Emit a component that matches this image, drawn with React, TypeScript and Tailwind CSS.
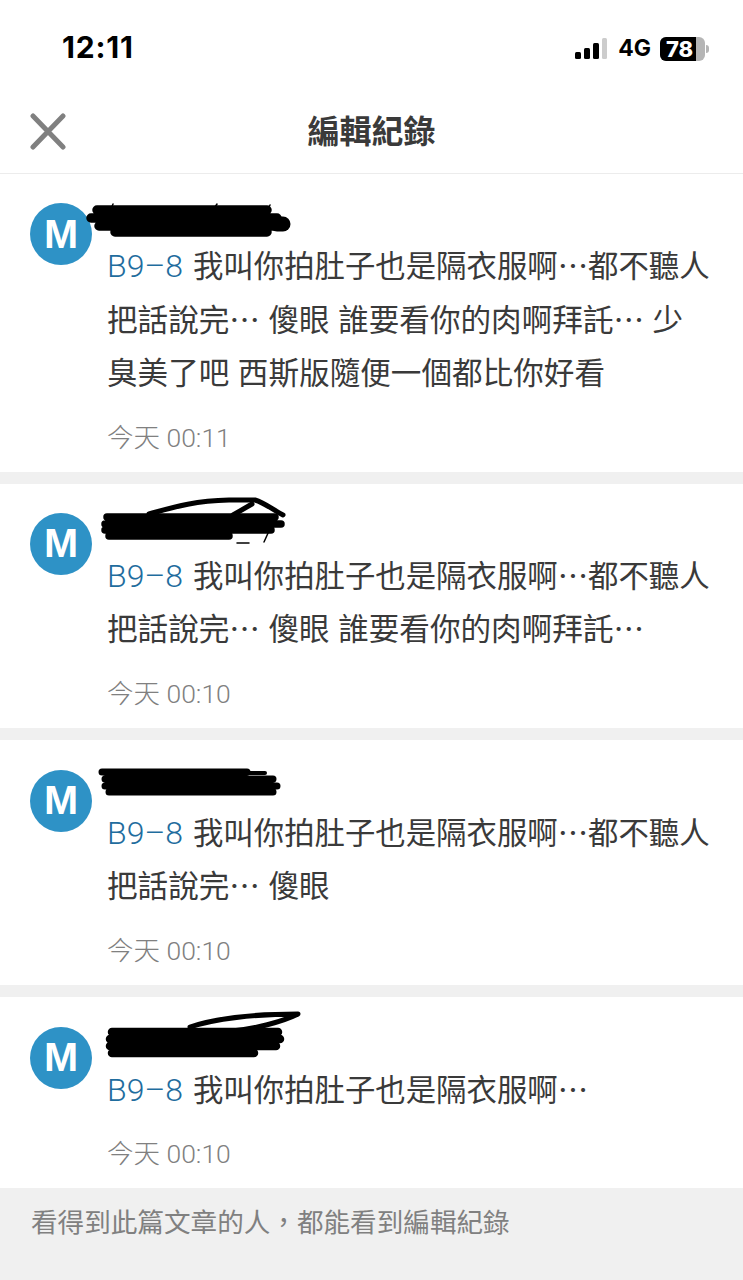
import React from 'react';

const FONT = "font-['Liberation_Sans','Noto_Sans_CJK_TC',sans-serif]";
const LATIN = "font-['Roboto','Noto_Sans_CJK_TC',sans-serif]";

const entries = [
  {
    first: '我叫你拍肚子也是隔衣服啊⋯都不聽人',
    rest: ['把話說完⋯ 傻眼 誰要看你的肉啊拜託⋯ 少', '臭美了吧 西斯版隨便一個都比你好看'],
    time: '今天 00:11',
    top: 'pt-[29px]',
    scribble: (
      <svg width="210" height="44" viewBox="0 0 210 44" className="absolute left-[-22px] top-[-4px]">
        <g fill="none" stroke="#000" strokeLinecap="round">
          <path d="M12 11 H182 M6 19 H192 M14 27 H192 M30 33 H182" strokeWidth="9.5" />
          <path d="M192 25 H198" strokeWidth="15" />
          <path d="M182 12 L185 6 M26 10 L28 5 M130 8 L132 5" strokeWidth="1.5" />
        </g>
      </svg>
    ),
  },
  {
    first: '我叫你拍肚子也是隔衣服啊⋯都不聽人',
    rest: ['把話說完⋯ 傻眼 誰要看你的肉啊拜託⋯'],
    time: '今天 00:10',
    top: 'pt-[29px]',
    scribble: (
      <svg width="200" height="56" viewBox="0 0 200 56" className="absolute left-[-8px] top-[-20px]">
        <g fill="none" stroke="#000" strokeLinecap="round" strokeLinejoin="round">
          <path d="M8 24 H176 M6 31 H182 M6 37 H172 M10 43 H130" strokeWidth="7.5" />
          <path d="M50 21 C72 15 92 8 130 7 L156 7 C166 10 174 17 184 22" strokeWidth="5" />
          <path d="M134 22 L153 11" strokeWidth="5" />
          <path d="M138 50 H150 M170 38 L165 49" strokeWidth="1.5" />
        </g>
      </svg>
    ),
  },
  {
    first: '我叫你拍肚子也是隔衣服啊⋯都不聽人',
    rest: ['把話說完⋯ 傻眼'],
    time: '今天 00:10',
    top: 'pt-[30px]',
    scribble: (
      <svg width="200" height="36" viewBox="0 0 200 36" className="absolute left-[-10px] top-[-4px]">
        <g fill="none" stroke="#000" strokeLinecap="round">
          <path d="M5 6 H150 M8 13 H176 M8 20 H180 M12 26 H176" strokeWidth="7" />
          <path d="M150 7 H168" strokeWidth="4" />
        </g>
      </svg>
    ),
  },
  {
    first: '我叫你拍肚子也是隔衣服啊⋯',
    rest: [],
    time: '今天 00:10',
    top: 'pt-[30px]',
    scribble: (
      <svg width="210" height="56" viewBox="0 0 210 56" className="absolute left-[-3px] top-[-18px]">
        <g fill="none" stroke="#000" strokeLinecap="round" strokeLinejoin="round">
          <path d="M8 23 H174 M6 30 H176 M6 37 H172 M8 44 H150" strokeWidth="8.5" />
          <path d="M86 18 C110 10 150 5 194 5 C178 13 150 20 128 22" strokeWidth="5" />
        </g>
      </svg>
    ),
  },
];

function StatusBar() {
  return (
    <div className="h-[96px] flex items-start justify-between pl-[62px] pr-[34px] pt-[29px] text-black">
      <span className="text-[30px] leading-[36px] font-bold tracking-[0.8px] font-['Inter','Liberation_Sans',sans-serif]">12:11</span>
      <div className="flex items-center h-[36px] pt-[3px]">
        <svg width="33" height="22" viewBox="0 0 33 22" className="mr-[10px]">
          <rect x="0" y="14" width="6" height="7" rx="1.5" fill="#000" />
          <rect x="9" y="10" width="6" height="11" rx="1.5" fill="#000" />
          <rect x="18" y="5" width="6" height="16" rx="1.5" fill="#000" />
          <rect x="27" y="0" width="5" height="21" rx="1.5" fill="#ccc" />
        </svg>
        <span className="text-[23px] leading-none font-bold font-['Inter','Liberation_Sans',sans-serif] mr-[9px]">4G</span>
        <div className="w-[45px] h-[24px] rounded-[6px] bg-[#b5b5b5] flex">
          <div className="w-[36px] rounded-l-[6px] bg-black flex items-center pl-[6px] text-white text-[22px] leading-none font-extrabold font-['Inter','Liberation_Sans',sans-serif]">
            78
          </div>
        </div>
        <div className="w-[3px] h-[8px] ml-[1px] rounded-r-full bg-[#b5b5b5]" />
      </div>
    </div>
  );
}

export default function App() {
  return (
    <div className={`w-[743px] h-[1280px] bg-white overflow-hidden flex flex-col ${FONT}`}>
      <StatusBar />

      {/* Header */}
      <header className="h-[78px] shrink-0 flex items-center justify-center relative border-b border-[#ececec] pb-[5px]">
        <svg width="38" height="38" viewBox="0 0 38 38" className="absolute left-[28px] top-[16px]">
          <path d="M5 4 L35 35 M35 4 L5 35" stroke="#808080" strokeWidth="5" strokeLinecap="round" fill="none" />
        </svg>
        <h1 className="text-[32px] leading-none font-bold text-[#3a3a3a]">編輯紀錄</h1>
      </header>

      {/* Entries */}
      <div className="flex-1 flex flex-col">
        {entries.map((entry, i) => (
          <React.Fragment key={i}>
            {i > 0 && <div className="h-[12px] shrink-0 bg-[#f0f0f0]" />}
            <div className={`flex gap-[15px] pl-[30px] pr-[30px] ${entry.top}`}>
              <div className="w-[62px] h-[62px] shrink-0 rounded-full bg-[#2e92c6] flex items-center justify-center text-white text-[41px] leading-none font-bold">
                M
              </div>
              <div className="min-w-0 flex-1">
                <div className="h-[37px] relative">{entry.scribble}</div>
                <div className="text-[30.6px] leading-[53.5px] text-[#3a3a3a] whitespace-nowrap">
                  <div className="flex items-baseline gap-[10px]">
                    <span className={`text-[#1f6d9e] text-[32px] font-light ${LATIN}`}>B9–8</span>
                    <span className="text-[30.4px]">{entry.first}</span>
                  </div>
                  {entry.rest.map((line, j) => (
                    <div key={j}>{line}</div>
                  ))}
                </div>
                <div className={`mt-[17px] mb-[14px] text-[26.5px] leading-[40px] text-[#808080] font-light ${LATIN}`}>{entry.time}</div>
              </div>
            </div>
          </React.Fragment>
        ))}
      </div>

      <footer className="h-[92px] shrink-0 bg-[#f0f0f0] pl-[31px] pt-[18px] text-[26.6px] leading-[34px] text-[#808080]">
        看得到此篇文章的人，都能看到編輯紀錄
      </footer>
    </div>
  );
}
